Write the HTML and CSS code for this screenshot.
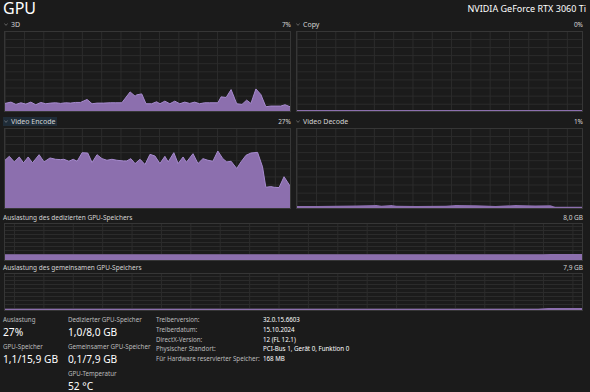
FILE: index.html
```html
<!DOCTYPE html>
<html lang="de">
<head>
  <meta charset="UTF-8">
  <meta name="viewport" content="width=device-width, initial-scale=1.0">
  <title>GPU</title>
  <link rel="stylesheet" href="styles.css">
</head>
<body>
  <header class="top">
    <h1 class="top__title">GPU</h1>
    <div class="top__model">NVIDIA GeForce RTX 3060 Ti</div>
  </header>

  <section class="engines">
    <div class="engine">
      <div class="engine__head">
        <span class="engine__name"><svg class="chevron" viewBox="0 0 6 4"><path d="M0.5 0.8 L3 3.2 L5.5 0.8"/></svg>3D</span>
        <span class="engine__value">7%</span>
      </div>
      <div class="graph">
        <svg viewBox="12 95 861 240" preserveAspectRatio="none">
          <polygon class="graph__fill" points="12,335 12,312 30,308 45,315 60,310 75,314 90,308 105,316 120,309 135,313 150,311 165,310 180,312 195,310 210,311 225,309 240,309 260,300 275,313 290,311 310,311 330,310 345,310 365,310 390,277 405,290 410,286 425,283 438,313 455,313 470,307 480,313 495,305 510,313 525,305 540,313 555,308 570,312 585,308 600,313 615,310 630,310 655,310 665,292 680,294 695,270 712,313 728,315 742,302 755,312 770,268 785,285 800,322 815,320 830,320 845,320 858,316 873,322 873,335"/>
          <polyline class="graph__line" points="12,312 30,308 45,315 60,310 75,314 90,308 105,316 120,309 135,313 150,311 165,310 180,312 195,310 210,311 225,309 240,309 260,300 275,313 290,311 310,311 330,310 345,310 365,310 390,277 405,290 410,286 425,283 438,313 455,313 470,307 480,313 495,305 510,313 525,305 540,313 555,308 570,312 585,308 600,313 615,310 630,310 655,310 665,292 680,294 695,270 712,313 728,315 742,302 755,312 770,268 785,285 800,322 815,320 830,320 845,320 858,316 873,322"/>
        </svg>
      </div>
    </div>

    <div class="engine">
      <div class="engine__head">
        <span class="engine__name"><svg class="chevron" viewBox="0 0 6 4"><path d="M0.5 0.8 L3 3.2 L5.5 0.8"/></svg>Copy</span>
        <span class="engine__value">0%</span>
      </div>
      <div class="graph">
        <svg viewBox="0 0 287 81" preserveAspectRatio="none">
          <polygon class="graph__fill" points="0,81 0,80 287,80 287,81"/>
        </svg>
      </div>
    </div>

    <div class="engine">
      <div class="engine__head">
        <span class="engine__name engine__name--active"><svg class="chevron" viewBox="0 0 6 4"><path d="M0.5 0.8 L3 3.2 L5.5 0.8"/></svg>Video Encode</span>
        <span class="engine__value">27%</span>
      </div>
      <div class="graph">
        <svg viewBox="12 55 861 240" preserveAspectRatio="none">
          <polygon class="graph__fill" points="12,295 12,150 25,138 40,155 55,140 68,158 82,140 95,158 115,133 130,155 148,143 165,147 180,148 190,147 205,153 218,147 230,153 245,127 262,128 275,157 290,133 305,145 320,150 335,147 350,150 370,152 380,152 392,145 405,160 420,147 435,163 450,132 465,137 480,160 495,138 505,155 522,127 535,160 550,140 560,156 580,130 595,160 610,145 625,150 640,153 655,122 670,145 682,155 695,153 712,175 725,155 740,135 755,128 775,126 790,170 800,232 815,230 825,232 840,233 855,200 873,228 873,295"/>
          <polyline class="graph__line" points="12,150 25,138 40,155 55,140 68,158 82,140 95,158 115,133 130,155 148,143 165,147 180,148 190,147 205,153 218,147 230,153 245,127 262,128 275,157 290,133 305,145 320,150 335,147 350,150 370,152 380,152 392,145 405,160 420,147 435,163 450,132 465,137 480,160 495,138 505,155 522,127 535,160 550,140 560,156 580,130 595,160 610,145 625,150 640,153 655,122 670,145 682,155 695,153 712,175 725,155 740,135 755,128 775,126 790,170 800,232 815,230 825,232 840,233 855,200 873,228"/>
        </svg>
      </div>
    </div>

    <div class="engine">
      <div class="engine__head">
        <span class="engine__name"><svg class="chevron" viewBox="0 0 6 4"><path d="M0.5 0.8 L3 3.2 L5.5 0.8"/></svg>Video Decode</span>
        <span class="engine__value">1%</span>
      </div>
      <div class="graph">
        <svg viewBox="0 0 287 81" preserveAspectRatio="none">
          <polygon class="graph__fill" points="0,81 0,79 20,79 40,78.8 60,78.5 80,78 85,78.6 95,78 100,78.6 120,79 150,78.6 160,78 180,78.3 200,79 220,78 240,78.5 255,78.2 260,79.6 287,79.6 287,81"/>
        </svg>
      </div>
    </div>
  </section>

  <section class="memory">
    <div class="memory__head">
      <span>Auslastung des dedizierten GPU-Speichers</span>
      <span>8,0 GB</span>
    </div>
    <div class="graph graph--memory">
      <svg viewBox="0 0 579 38" preserveAspectRatio="none">
        <polygon class="graph__fill" points="0,38 0,32 540,32 548,31.6 579,31.6 579,38"/>
      </svg>
    </div>
    <div class="memory__head">
      <span>Auslastung des gemeinsamen GPU-Speichers</span>
      <span>7,9 GB</span>
    </div>
    <div class="graph graph--memory">
      <svg viewBox="0 0 579 38" preserveAspectRatio="none">
        <polygon class="graph__fill" points="0,38 0,36.6 535,36.6 545,36 579,36 579,38"/>
      </svg>
    </div>
  </section>

  <section class="stats">
    <div class="stats__col stats__col--first">
      <div class="stat">
        <div class="stat__label">Auslastung</div>
        <div class="stat__value">27%</div>
      </div>
      <div class="stat">
        <div class="stat__label">GPU-Speicher</div>
        <div class="stat__value">1,1/15,9 GB</div>
      </div>
    </div>
    <div class="stats__col stats__col--second">
      <div class="stat">
        <div class="stat__label">Dedizierter GPU-Speicher</div>
        <div class="stat__value">1,0/8,0 GB</div>
      </div>
      <div class="stat">
        <div class="stat__label">Gemeinsamer GPU-Speicher</div>
        <div class="stat__value">0,1/7,9 GB</div>
      </div>
      <div class="stat">
        <div class="stat__label">GPU-Temperatur</div>
        <div class="stat__value">52 °C</div>
      </div>
    </div>
    <dl class="details">
      <dt>Treiberversion:</dt><dd>32.0.15.6603</dd>
      <dt>Treiberdatum:</dt><dd>15.10.2024</dd>
      <dt>DirectX-Version:</dt><dd>12 (FL 12.1)</dd>
      <dt>Physischer Standort:</dt><dd>PCI-Bus 1, Gerät 0, Funktion 0</dd>
      <dt>Für Hardware reservierter Speicher:</dt><dd>168 MB</dd>
    </dl>
  </section>
</body>
</html>
```

FILE: styles.css
```css
:root {
  --bg: #1b1b1b;
  --grid: #2b2b2b;
  --border: #363636;
  --fill: #8c6fae;
  --line: #a78bd0;
  --text: #d4d4d4;
  --text-dim: #bcbcbc;
}
* {
  box-sizing: border-box;
}
body {
  margin: 0;
  padding: 0 7px 0 4px;
  background: var(--bg);
  color: var(--text);
  font-family: 'Noto Sans', 'Open Sans', sans-serif;
  overflow: hidden;
}
.top {
  display: flex;
  justify-content: space-between;
  align-items: flex-start;
  height: 18px;
  margin-left: -1px;
}
.top__title {
  margin: 0;
  font-size: 16px;
  font-weight: 400;
  line-height: 16px;
  color: #fff;
}
.top__model {
  font-size: 9px;
  line-height: 18px;
  color: #fff;
  margin-right: -3px;
}
.engines {
  display: grid;
  grid-template-columns: 1fr 1fr;
  column-gap: 5px;
  row-gap: 3px;
}
.engine__head {
  display: flex;
  justify-content: space-between;
  align-items: center;
  height: 13px;
  font-size: 7px;
  color: var(--text);
}
.engine__name {
  display: flex;
  align-items: center;
  gap: 3px;
  height: 9px;
  padding: 0 2px 0 1px;
  margin-left: -1px;
}
.engine__name--active {
  background: #1f2c38;
}
.chevron {
  width: 4px;
  height: 3px;
  fill: none;
  stroke: #9a9a9a;
  stroke-width: 0.9;
}
.engine__value {
  font-size: 6.5px;
}
.graph {
  height: 81px;
  border: 1px solid var(--border);
  background-image:
    linear-gradient(to right, var(--grid) 1px, transparent 1px),
    linear-gradient(to bottom, var(--grid) 1px, transparent 1px);
  background-size: 19.3px 8.1px;
  background-position: 19px 0, 0 7px;
}
.graph svg {
  display: block;
  width: 100%;
  height: 100%;
}
.graph__fill {
  fill: var(--fill);
}
.graph__line {
  fill: none;
  stroke: var(--line);
  stroke-width: 1;
  vector-effect: non-scaling-stroke;
}
.graph--memory {
  height: 38px;
  background-size: 29.4px 4px;
  background-position: 9px 0, 0 2px;
}
.memory {
  margin-top: 2px;
}
.memory__head {
  display: flex;
  justify-content: space-between;
  align-items: center;
  height: 12px;
  font-size: 6.5px;
  color: var(--text);
  margin-left: -1px;
}
.stats {
  display: flex;
  margin-top: 4px;
  margin-left: -1px;
}
.stats__col--first {
  width: 65px;
}
.stats__col--second {
  width: 88px;
}
.stat {
  margin-bottom: 3px;
}
.stat__label {
  font-size: 6.2px;
  line-height: 10px;
  color: var(--text-dim);
  white-space: nowrap;
}
.stat__value {
  font-size: 10.2px;
  line-height: 14px;
  color: #fff;
  white-space: nowrap;
}
.details {
  display: grid;
  grid-template-columns: 107px auto;
  margin: 0;
  font-size: 6.2px;
  line-height: 9.75px;
  align-content: start;
  white-space: nowrap;
}
.details dt {
  color: var(--text-dim);
}
.details dd {
  margin: 0;
  color: #fff;
}
```
